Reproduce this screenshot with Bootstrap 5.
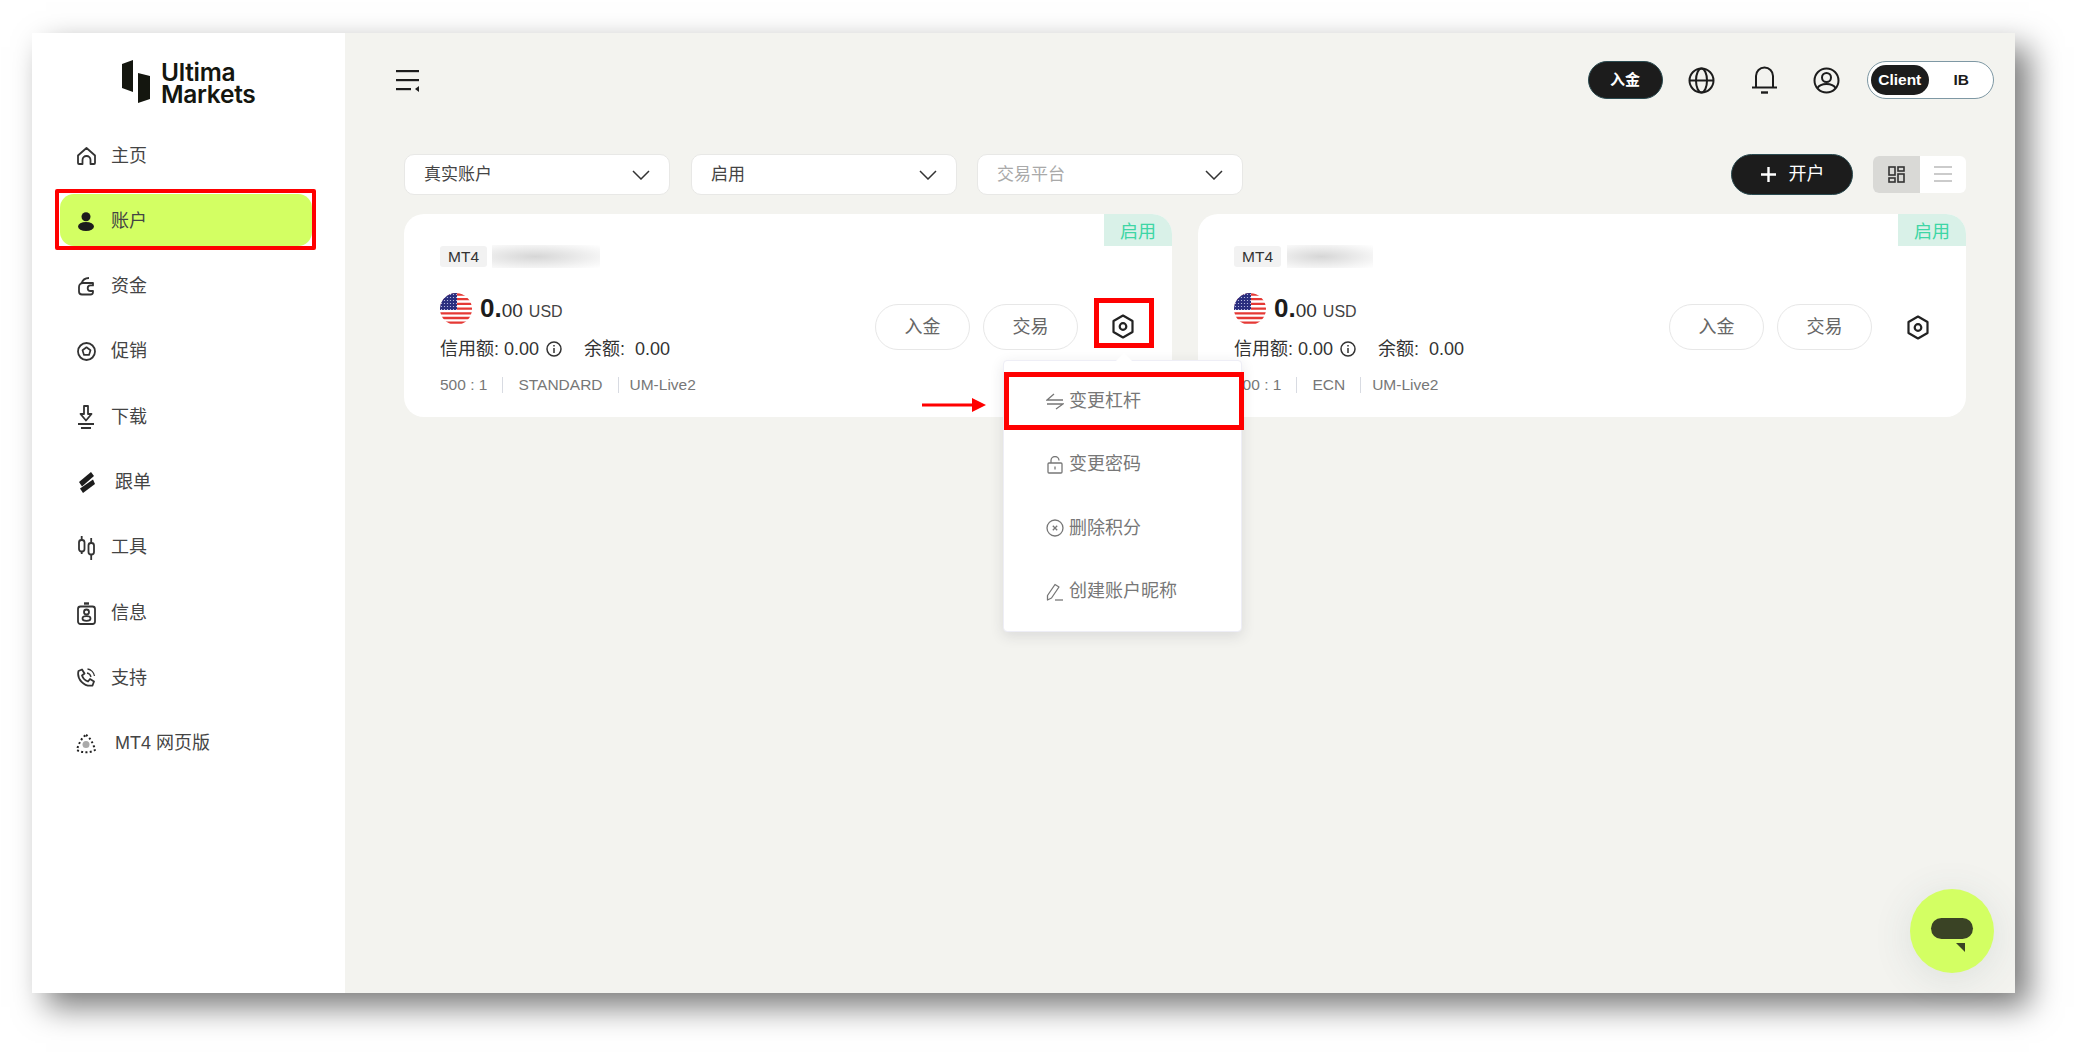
<!DOCTYPE html>
<html lang="zh-CN">

<head>
    <meta charset="UTF-8">
    <meta name="viewport" content="width=device-width, initial-scale=1.0">
    <title>Ultima Markets</title>
    <link rel="stylesheet" href="https://cdn.jsdelivr.net/npm/bootstrap@5.3.3/dist/css/bootstrap.min.css">
    <style>
        html, body { height: 100%; }
        body {
            background: #fff;
            font-family: "Liberation Sans", "Noto Sans CJK SC", sans-serif;
            overflow: hidden;
        }
        .um-window {
            margin: 33px 0 0 32px;
            width: 1983px;
            height: 960px;
            background: #f3f3ef;
            box-shadow: 14px 14px 30px rgba(0, 0, 0, .52);
            position: relative;
        }
        .um-side { width: 313px; background: #fff; flex-shrink: 0; }
        .um-logo { height: 96px; padding: 27px 0 0 90px; }
        .um-logo-text {
            font-family: Inter, "Liberation Sans", sans-serif;
            font-weight: 600;
            font-size: 24.5px;
            line-height: 22px;
            letter-spacing: -.3px;
            color: #14160f;
            margin-left: 11px;
            padding-top: 1px;
        }
        .um-menu .nav-link {
            height: 52px;
            margin: 0 33px 13.3px 28px;
            padding: 2px 0 0 16px;
            border-radius: 14px;
            color: #444;
            font-size: 18px;
            gap: 15px;
            position: relative;
        }
        .um-slot { width: 20px; flex-shrink: 0; }
        .um-menu .nav-link.um-wide { gap: 19px; }
        .um-menu .nav-link.active { background: #d3ff63; color: #444; }
        .um-menu .nav-link.active::after {
            content: ""; position: absolute; top: -5px; bottom: -4px; left: -5px; right: -4px;
            border: 4px solid #f00; border-radius: 2px;
        }
        .um-main { padding: 28px 49px 0 59px; position: relative; }
        .um-top { height: 38px; margin-right: -28px; }
        .um-burger { margin-left: -8px; }
        .um-pill-dark { background: #1c1c1c; color: #fff; border: 1px solid #2a4a50; }
        .um-deposit { width: 75px; height: 38px; padding: 0; font-size: 15px; font-weight: 700; margin-right: 8px; }
        .um-tool { width: 62.5px; }
        .um-switch {
            width: 127px; height: 38px; padding: 3px;
            background: #fff; border: 1px solid #7e98a4; font-size: 15.5px; font-weight: 700; color: #1c1c1c;
            margin-left: 9px;
        }
        .um-switch-on { width: 60px; height: 30px; background: #1c1c1c; color: #fff; }
        .um-switch-off { width: 60px; }
        .um-bar { margin-top: 54px; height: 41px; padding-top: 1px; }
        .um-select {
            width: 266px; height: 41px; padding: 2px 19px 0; background: #fff;
            border: 1px solid #e8e8e6; border-radius: 10px; font-size: 17px; color: #444;
        }
        .um-select.um-empty { color: #a9a9a9; }
        .um-gap-a { margin-left: 21px; }
        .um-gap-b { margin-left: 20px; }
        .um-open { width: 122px; height: 41px; padding: 0; font-size: 18px; gap: 12px; }
        .um-view { width: 93px; height: 37px; border-radius: 6px; background: #fff; overflow: hidden; margin-left: 20px; }
        .um-view > div { width: 50%; }
        .um-view-on { background: #d9d9d6; }
        .um-cards { margin-top: 20px; gap: 26px; }
        .um-card {
            width: 768px; height: 203px; padding: 31px 18px 0 36px;
            border: 0; border-radius: 20px; background: #fff; position: relative;
        }
        .um-status {
            position: absolute; top: 0; right: 0; width: 68px; height: 32px; padding-top: 4px;
            background: #d9f1e8; color: #3ed6a5; font-size: 18px;
            border-radius: 0 20px 0 0;
        }
        .um-platform {
            width: 47px; height: 21px; background: #f2f2f2; color: #333; font-size: 15.500px; font-weight: 400;
            border-radius: 3px; padding: 0;
        }
        .um-blur {
            width: 108px; height: 23px; margin-left: 5px;
            background: radial-gradient(ellipse at 40% 50%, #d6d6d6 0, #f4f4f4 70%, #fff 100%);
        }
        .um-blur-b { width: 86px; margin-left: 6px; }
        .um-money { margin-top: 25px; height: 31px; gap: 8px; color: #1c1c1c; }
        .um-big { font-size: 26px; font-weight: 700; line-height: 31px; padding-top: 2px; }
        .um-cents { font-size: 19px; font-weight: 400; color: #333; }
        .um-cur { font-size: 16px; color: #444; margin-left: 6px; font-weight: 400; }
        .um-credit { margin-top: 13px; font-size: 18px; line-height: 24px; color: #333; }
        .um-info { margin-left: 7px; }
        .um-balance { margin-left: 22px; }
        .um-meta { margin-top: 12px; font-size: 15.500px; line-height: 24px; color: #777; }
        .um-sep { width: 1px; height: 16px; background: #d8dbe2; margin: 0 15px; }
        .um-sep-tight { margin: 0 11px 0 15px; }
        .um-actions { margin-top: 36px; gap: 13px; height: 46px; }
        .um-trade {
            width: 95px; height: 46px; padding: 0; background: #fff;
            border: 1px solid #e7e7e7; color: #666; font-size: 18px;
        }
        .um-gear { width: 60px; height: 50px; margin-left: 3px; }
        .um-mark { outline: 5px solid #f00; outline-offset: -5px; margin-top: -9px; padding: 7px 3px 0 0; }
        .um-pop {
            display: block; left: 599px; top: 146px; width: 239px; height: 272px; padding: 8px 0 0;
            border: 1px solid #eeeef6; border-radius: 4px; z-index: 20;
            box-shadow: 0 4px 14px rgba(40, 40, 60, .12);
        }
        .um-pop::before {
            content: ""; position: absolute; top: -8px; left: 112px;
            border: 8px solid transparent; border-top: 0; border-bottom-color: #fff;
        }
        .um-pop .dropdown-item {
            height: 63.6px; display: flex; align-items: center; gap: 5px;
            padding: 0 0 0 42px; color: #777; font-size: 18px; background: transparent;
        }
        .um-pop .um-hit { outline: 5px solid #f00; outline-offset: -5px; height: 58px; margin: 3px 0; width: 240px; }
        .um-arrow { position: absolute; left: 518px; top: 184px; z-index: 21; }
        .um-chat {
            position: absolute; right: 21px; bottom: 20px; width: 84px; height: 84px;
            background: #d3ff63; box-shadow: 0 6px 40px rgba(60, 90, 90, .12); z-index: 5;
        }
    </style>
</head>

<body>
    <svg width="0" height="0" class="d-block">
        <defs>
            <pattern id="flagDots" width="3" height="3" patternUnits="userSpaceOnUse"><rect width="3" height="3" fill="#2b2f7f" /><circle cx="1.500" cy="1.500" r=".6" fill="#cfd2ee" /></pattern>
            <clipPath id="flagClip"><circle cx="16" cy="16" r="16" /></clipPath>
        </defs>
    </svg>
    <div class="um-window d-flex">
        <aside class="um-side">
            <div class="um-logo d-flex align-items-start">
                <svg width="28" height="43" viewBox="0 0 28 43" fill="#14160f"><path d="M0 4 11 0V32L0 28Z" /><path d="M16 13 28 16V39L16 43Z" /></svg>
                <div class="um-logo-text">Ultima<br>Markets</div>
            </div>
            <nav class="um-menu nav flex-column">
                <a class="nav-link d-flex align-items-center" href="#"><span class="um-slot d-flex justify-content-center"><svg width="19" height="18" viewBox="0 0 19 18" fill="none" stroke="#333" stroke-width="1.800"><path d="M1 8.500 9.500 1 18 8.500V16a1 1 0 0 1-1 1h-3.500v-4a4 4 0 0 0-8 0v4H2a1 1 0 0 1-1-1Z" stroke-linejoin="round" /></svg></span>主页</a>
                <a class="nav-link active d-flex align-items-center" href="#"><span class="um-slot d-flex justify-content-center"><svg width="16" height="19" viewBox="0 0 16 19" fill="#1c1c1c"><circle cx="8" cy="4.700" r="4.500" /><ellipse cx="8" cy="14.500" rx="8" ry="4.500" /></svg></span>账户</a>
                <a class="nav-link d-flex align-items-center" href="#"><span class="um-slot d-flex justify-content-center"><svg width="18" height="19" viewBox="0 0 18 19" fill="none" stroke="#333" stroke-width="1.800"><path d="M16 6H6a4 4 0 0 0-4 4v4.500a3 3 0 0 0 3 3h8.500a2.500 2.500 0 0 0 2.500-2.500v-1h-2.500a2.800 2.800 0 0 1 0-5.600H16Z" stroke-linejoin="round" /><path d="M4.500 6.500C5.500 3 8.500 1 12 1" /></svg></span>资金</a>
                <a class="nav-link d-flex align-items-center" href="#"><span class="um-slot d-flex justify-content-center"><svg width="19" height="19" viewBox="0 0 19 19" fill="none" stroke="#333" stroke-width="1.800"><circle cx="9.500" cy="9.500" r="8.500" /><path d="m9.500 5.300 4 2.900-1.500 4.700H7L5.500 8.200Z" stroke-width="1.700" stroke-linejoin="round" /></svg></span>促销</a>
                <a class="nav-link d-flex align-items-center" href="#"><span class="um-slot d-flex justify-content-center"><svg width="16" height="24" viewBox="0 0 16 24" fill="none" stroke="#333" stroke-width="1.800"><path d="M6 1h4v8h3.500L8 15.500 2.500 9H6Z" stroke-linejoin="round" /><path d="M0 19h16M3 23h10" /></svg></span>下载</a>
                <a class="nav-link um-wide d-flex align-items-center" href="#"><span class="um-slot d-flex justify-content-center"><svg width="17" height="21" viewBox="0 0 17 21" fill="#1c1c1c"><path d="M1 10 13 0l3 4L4 14.500Z" /><path d="M15 7.500 17 12 5 21l-3-4.500Z" /></svg></span>跟单</a>
                <a class="nav-link d-flex align-items-center" href="#"><span class="um-slot d-flex justify-content-center"><svg width="17" height="24" viewBox="0 0 17 24" fill="none" stroke="#333" stroke-width="1.800"><rect x="1" y="4" width="5.500" height="11.500" rx="2.500" /><path d="M3.700 0v4M3.700 15.500V18" /><rect x="10.500" y="7" width="5.500" height="11.500" rx="2.500" /><path d="M13.200 2v5M13.200 18.500V24" /></svg></span>工具</a>
                <a class="nav-link d-flex align-items-center" href="#"><span class="um-slot d-flex justify-content-center"><svg width="19" height="23" viewBox="0 0 19 23" fill="none" stroke="#333" stroke-width="1.800"><rect x="1" y="4.500" width="17" height="17.500" rx="2.500" /><path d="M7 1.500h5" stroke-width="2.400" /><circle cx="9.500" cy="10" r="2.500" /><ellipse cx="9.500" cy="16.500" rx="4" ry="2.300" /></svg></span>信息</a>
                <a class="nav-link d-flex align-items-center" href="#"><span class="um-slot d-flex justify-content-center"><svg width="20" height="20" viewBox="0 0 20 20" fill="none" stroke="#333" stroke-width="1.800"><path d="M2.500 3 6 1.500l2.500 4L6 7.500c1 3 3 5 6 6l2-2.500 4 2.500-1.500 4C8 19 .5 11 2.500 3Z" stroke-linejoin="round" /><path d="M11 5c2 .3 3.500 1.800 4 4M11.500 1c3.500.5 6.500 3.500 7 7" stroke-width="1.300" /></svg></span>支持</a>
                <a class="nav-link um-wide d-flex align-items-center" href="#"><span class="um-slot d-flex justify-content-center"><svg width="20" height="20" viewBox="0 0 20 20" fill="none" stroke="#222" stroke-width="2" stroke-dasharray="2 2.300"><path d="M10 1C14 3 18 11 19 16 14 19 6 19 1 16 2 11 6 3 10 1Z" /><circle cx="10" cy="10.500" r="3.500" fill="#aaa" stroke="none" /></svg></span>MT4 网页版</a>
            </nav>
        </aside>

        <main class="um-main flex-grow-1">
            <div class="um-top d-flex align-items-center">
                <svg class="um-burger" width="24" height="24" viewBox="0 0 24 24" fill="#1c1c1c"><rect y="2" width="23" height="2.200" /><rect y="11" width="23" height="2.200" /><rect y="20" width="15" height="2.200" /><path d="M23 18v6l-4-3Z" /></svg>
                <button class="btn um-pill-dark rounded-pill um-deposit ms-auto" type="button">入金</button>
                <div class="um-tool d-flex justify-content-center"><svg width="27" height="27" viewBox="0 0 27 27" fill="none" stroke="#1c1c1c" stroke-width="2"><circle cx="13.500" cy="13.500" r="12" /><ellipse cx="13.500" cy="13.500" rx="5.500" ry="12" /><path d="M1.500 13.500h24" /></svg></div>
                <div class="um-tool d-flex justify-content-center"><svg width="27" height="28" viewBox="0 0 27 28" fill="none" stroke="#1c1c1c" stroke-width="2"><path d="M5 21V10a8.500 8.500 0 0 1 17 0v11" /><path d="M1 21.500h25" /><path d="M10 26.500h7" stroke-width="2.400" /></svg></div>
                <div class="um-tool d-flex justify-content-center"><svg width="27" height="27" viewBox="0 0 27 27" fill="none" stroke="#1c1c1c" stroke-width="2"><circle cx="13.500" cy="13.500" r="12" /><circle cx="13.500" cy="10.500" r="4.500" /><path d="M4.500 21c3-5.500 15-5.500 18 0" /></svg></div>
                <div class="um-switch rounded-pill d-flex align-items-center">
                    <div class="um-switch-on rounded-pill d-flex align-items-center justify-content-center">Client</div>
                    <div class="um-switch-off text-center ms-1">IB</div>
                </div>
            </div>

            <div class="um-bar d-flex align-items-center">
                <div class="um-select d-flex align-items-center justify-content-between">真实账户
                    <svg width="18" height="10" viewBox="0 0 18 10" fill="none" stroke="#333" stroke-width="1.500"><path d="m1 1 8 8 8-8" /></svg>
                </div>
                <div class="um-select um-gap-a d-flex align-items-center justify-content-between">启用
                    <svg width="18" height="10" viewBox="0 0 18 10" fill="none" stroke="#333" stroke-width="1.500"><path d="m1 1 8 8 8-8" /></svg>
                </div>
                <div class="um-select um-empty um-gap-b d-flex align-items-center justify-content-between">交易平台
                    <svg width="18" height="10" viewBox="0 0 18 10" fill="none" stroke="#333" stroke-width="1.500"><path d="m1 1 8 8 8-8" /></svg>
                </div>
                <button class="btn um-pill-dark rounded-pill um-open d-flex align-items-center justify-content-center ms-auto" type="button">
                    <svg width="17" height="17" viewBox="0 0 17 17" stroke="#fff" stroke-width="2.400"><path d="M8.500 1v15M1 8.500h15" /></svg>开户
                </button>
                <div class="um-view d-flex">
                    <div class="um-view-on d-flex align-items-center justify-content-center">
                        <svg width="17" height="17" viewBox="0 0 17 17" fill="none" stroke="#333" stroke-width="1.600"><rect x="1" y="1" width="6" height="8" /><rect x="10" y="1" width="6" height="4" /><rect x="1" y="12" width="6" height="4" /><rect x="10" y="8" width="6" height="8" /></svg>
                    </div>
                    <div class="d-flex align-items-center justify-content-center">
                        <svg width="18" height="16" viewBox="0 0 18 16" stroke="#bbb" stroke-width="1.600"><path d="M0 1h18M0 8h18M0 15h18" /></svg>
                    </div>
                </div>
            </div>

            <div class="um-cards d-flex">
                <div class="card um-card">
                    <div class="um-status d-flex align-items-center justify-content-center">启用</div>
                    <div class="d-flex align-items-center">
                        <span class="badge um-platform d-flex align-items-center justify-content-center">MT4</span>
                        <div class="um-blur"></div>
                    </div>
                    <div class="d-flex justify-content-between">
                        <div>
                            <div class="um-money d-flex align-items-center">
                                <svg width="32" height="32" viewBox="0 0 32 32"><g clip-path="url(#flagClip)"><rect width="32" height="32" fill="#fff" /><path d="M0 1.500h32M0 6.200h32M0 10.900h32M0 15.600h32M0 20.300h32M0 25h32M0 29.700h32" stroke="#e53935" stroke-width="2.300" /><rect width="17" height="17" fill="url(#flagDots)" /></g></svg>
                                <div class="um-big">0.<span class="um-cents">00</span><span class="um-cur">USD</span></div>
                            </div>
                            <div class="um-credit d-flex align-items-center">信用额: 0.00
                                <svg class="um-info" width="16" height="16" viewBox="0 0 16 16" fill="none" stroke="#333" stroke-width="1.500"><circle cx="8" cy="8" r="7" /><path d="M8 7v5M8 4v1.600" /></svg>
                                <span class="um-balance">余额:&nbsp; 0.00</span>
                            </div>
                            <div class="um-meta d-flex align-items-center">500 : 1<span class="um-sep"></span>STANDARD<span class="um-sep um-sep-tight"></span>UM-Live2</div>
                        </div>
                        <div class="um-actions d-flex align-items-center">
                            <button class="btn um-trade rounded-pill" type="button">入金</button>
                            <button class="btn um-trade rounded-pill" type="button">交易</button>
                            <div class="um-gear um-mark d-flex align-items-center justify-content-center">
                                <svg width="22" height="25" viewBox="0 0 22 25" fill="none" stroke="#222" stroke-width="2.200"><path d="M11 1.500 20.500 7v11L11 23.500 1.500 18V7Z" stroke-linejoin="round" /><circle cx="11" cy="12.500" r="3.300" /></svg>
                            </div>
                        </div>
                    </div>

                    <svg class="um-arrow" width="64" height="14" viewBox="0 0 64 14" fill="#f00"><rect y="5.500" width="52" height="3" /><path d="M50 0 64 7 50 14Z" /></svg>

                    <ul class="dropdown-menu show um-pop list-unstyled">
                        <li><a class="dropdown-item um-hit" href="#"><svg width="18" height="17" viewBox="0 0 18 17" fill="none" stroke="#777" stroke-width="1.300"><path d="M8 1 1 7h16M1 11h16l-7 5" /></svg>变更杠杆</a></li>
                        <li><a class="dropdown-item" href="#"><svg width="18" height="18" viewBox="0 0 18 18" fill="none" stroke="#777" stroke-width="1.300"><rect x="2" y="7" width="14" height="10" rx="1" /><path d="M5 7V4.500a4 4 0 0 1 8 0M9 10.500v3" /></svg>变更密码</a></li>
                        <li><a class="dropdown-item" href="#"><svg width="18" height="18" viewBox="0 0 18 18" fill="none" stroke="#777" stroke-width="1.300"><circle cx="9" cy="9" r="8" /><path d="m6.800 6.800 4.400 4.400M11.200 6.800l-4.400 4.400" /></svg>删除积分</a></li>
                        <li><a class="dropdown-item" href="#"><svg width="18" height="18" viewBox="0 0 18 18" fill="none" stroke="#777" stroke-width="1.300"><path d="M1.500 12.500 9 1.500l4 2.500-7.500 11-4 2Z" stroke-linejoin="round" /><path d="M9 17h8" /></svg>创建账户昵称</a></li>
                    </ul>
                </div>

                <div class="card um-card">
                    <div class="um-status d-flex align-items-center justify-content-center">启用</div>
                    <div class="d-flex align-items-center">
                        <span class="badge um-platform d-flex align-items-center justify-content-center">MT4</span>
                        <div class="um-blur um-blur-b"></div>
                    </div>
                    <div class="d-flex justify-content-between">
                        <div>
                            <div class="um-money d-flex align-items-center">
                                <svg width="32" height="32" viewBox="0 0 32 32"><g clip-path="url(#flagClip)"><rect width="32" height="32" fill="#fff" /><path d="M0 1.500h32M0 6.200h32M0 10.900h32M0 15.600h32M0 20.300h32M0 25h32M0 29.700h32" stroke="#e53935" stroke-width="2.300" /><rect width="17" height="17" fill="url(#flagDots)" /></g></svg>
                                <div class="um-big">0.<span class="um-cents">00</span><span class="um-cur">USD</span></div>
                            </div>
                            <div class="um-credit d-flex align-items-center">信用额: 0.00
                                <svg class="um-info" width="16" height="16" viewBox="0 0 16 16" fill="none" stroke="#333" stroke-width="1.500"><circle cx="8" cy="8" r="7" /><path d="M8 7v5M8 4v1.600" /></svg>
                                <span class="um-balance">余额:&nbsp; 0.00</span>
                            </div>
                            <div class="um-meta d-flex align-items-center">500 : 1<span class="um-sep"></span>ECN<span class="um-sep um-sep-tight"></span>UM-Live2</div>
                        </div>
                        <div class="um-actions d-flex align-items-center">
                            <button class="btn um-trade rounded-pill" type="button">入金</button>
                            <button class="btn um-trade rounded-pill" type="button">交易</button>
                            <div class="um-gear d-flex align-items-center justify-content-center">
                                <svg width="22" height="25" viewBox="0 0 22 25" fill="none" stroke="#222" stroke-width="2.200"><path d="M11 1.500 20.500 7v11L11 23.500 1.500 18V7Z" stroke-linejoin="round" /><circle cx="11" cy="12.500" r="3.300" /></svg>
                            </div>
                        </div>
                    </div>
                </div>
            </div>

            <div class="um-chat rounded-circle">
                <svg width="84" height="84" viewBox="0 0 84 84"><rect x="21" y="29" width="42" height="21" rx="10.500" fill="#3a4325" /><path d="M46 54h9v9Z" fill="#3a4325" /></svg>
            </div>
        </main>
    </div>
    <script src="https://cdn.jsdelivr.net/npm/bootstrap@5.3.3/dist/js/bootstrap.bundle.min.js"></script>
</body>

</html>
